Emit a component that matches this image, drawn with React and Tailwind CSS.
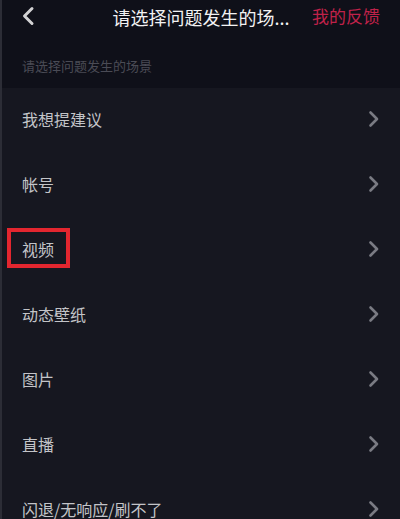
import React from "react";

const items = ["我想提建议", "帐号", "视频", "动态壁纸", "图片", "直播", "闪退/无响应/刷不了"];

function Chevron() {
  return (
    <svg width="12" height="18" viewBox="0 0 12 18" className="shrink-0">
      <path d="M2.5 2.5 L9 9 L2.5 15.5" fill="none" stroke="#7a7b83" strokeWidth="2.6" strokeLinecap="round" strokeLinejoin="round" />
    </svg>
  );
}

export default function App() {
  return (
    <div
      className="w-[400px] h-[519px] overflow-hidden border-l-2 border-[#2c2d36] bg-[#161720] flex flex-col"
      style={{ fontFamily: '"Noto Sans CJK SC", "Noto Sans", sans-serif' }}
    >
      <div className="bg-[#0f1019] shrink-0">
        <div className="relative h-[34px] flex items-center justify-center">
          <svg width="14" height="20" viewBox="0 0 14 20" className="absolute left-[19px] top-[6px]">
            <path d="M11 2.5 L3.5 10 L11 17.5" fill="none" stroke="#d2d2d4" strokeWidth="3" strokeLinecap="round" strokeLinejoin="round" />
          </svg>
          <span className="text-[18px] leading-none text-[#f2f2f3]">请选择问题发生的场...</span>
          <span className="absolute right-[20px] top-[7px] text-[17px] leading-none text-[#c0224a]">我的反馈</span>
        </div>
        <div className="h-[54px] pl-5 pt-[23px]">
          <span className="block text-[13px] leading-[18px] text-[#4a4b55]">请选择问题发生的场景</span>
        </div>
      </div>
      <div className="flex flex-col">
        {items.map((t) => (
          <div key={t} className="h-[65px] shrink-0 flex items-center justify-between pl-5 pr-[20px] pb-[3px]">
            <span className="relative text-[16px] leading-none text-[#c3c4c8]">
              {t}
              {t === "视频" && (
                <span className="absolute left-[-15px] right-[-16px] top-[-13px] bottom-[-11px] border-4 border-[#e3262f]" />
              )}
            </span>
            <Chevron />
          </div>
        ))}
      </div>
    </div>
  );
}
